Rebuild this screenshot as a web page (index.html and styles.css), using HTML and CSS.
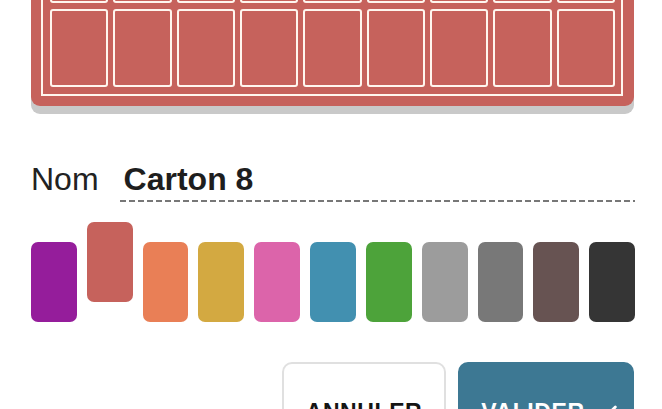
FILE: index.html
```html
<!DOCTYPE html>
<html lang="fr">
<head>
<meta charset="utf-8">
<title>Carton</title>
<link rel="stylesheet" href="styles.css">
</head>
<body>
<div class="page">
  <div class="board">
    <div class="frame">
      <div class="row">
        <div class="cell"></div><div class="cell"></div><div class="cell"></div>
        <div class="cell"></div><div class="cell"></div><div class="cell"></div>
        <div class="cell"></div><div class="cell"></div><div class="cell"></div>
      </div>
      <div class="row">
        <div class="cell"></div><div class="cell"></div><div class="cell"></div>
        <div class="cell"></div><div class="cell"></div><div class="cell"></div>
        <div class="cell"></div><div class="cell"></div><div class="cell"></div>
      </div>
    </div>
  </div>

  <div class="name-row">
    <label class="name-label" for="name">Nom</label>
    <div class="name-input" id="name">Carton 8</div>
  </div>

  <div class="swatches">
    <div class="swatch purple"></div>
    <div class="swatch red selected"></div>
    <div class="swatch orange"></div>
    <div class="swatch gold"></div>
    <div class="swatch pink"></div>
    <div class="swatch blue"></div>
    <div class="swatch green"></div>
    <div class="swatch lightgray"></div>
    <div class="swatch gray"></div>
    <div class="swatch brown"></div>
    <div class="swatch dark"></div>
  </div>

  <div class="actions">
    <button class="btn btn-cancel">ANNULER</button>
    <button class="btn btn-ok">VALIDER<svg class="check" viewBox="0 0 24 24" width="22" height="22"><path d="M4 12.5l5 5L20 6.5" fill="none" stroke="#fff" stroke-width="3.2" stroke-linecap="round" stroke-linejoin="round"/></svg></button>
  </div>
</div>
</body>
</html>
```

FILE: styles.css
```css
html, body {
  margin: 0;
  padding: 0;
  background: #ffffff;
  overflow: hidden;
}

.page {
  padding: 0 27px 0 31px;
  font-family: "Liberation Sans", Arial, sans-serif;
  color: #222;
}

.board {
  width: 603px;
  box-sizing: border-box;
  margin-top: -94px;
  padding: 10px 11px 10px 10px;
  background: #c6625c;
  border-radius: 0 0 9px 9px;
  box-shadow: 0 8px 0 #c9c9c9;
}

.frame {
  border: 2px solid #fff6ef;
  padding: 7px 6px 7px 7px;
  display: flex;
  flex-direction: column;
  gap: 6px;
}

.row {
  display: flex;
  gap: 5px;
}

.cell {
  flex: 1;
  height: 78px;
  box-sizing: border-box;
  border: 2px solid #fff6ef;
  border-radius: 3px;
}

.name-row {
  margin-top: 53px;
  display: flex;
  align-items: flex-start;
  gap: 21px;
}

.name-label {
  font-size: 32px;
  line-height: 40px;
  color: #222;
}

.name-input {
  flex: 1;
  font-size: 32px;
  line-height: 40px;
  font-weight: bold;
  color: #1e1e1e;
  padding: 0 0 3px 4px;
  background-image: linear-gradient(to right, #777 0, #777 6px, transparent 6px);
  background-size: 9px 2px;
  background-repeat: repeat-x;
  background-position: 0 100%;
}

.swatches {
  margin-top: 20px;
  height: 100px;
  display: flex;
  gap: 10px;
}

.swatch {
  flex: 1;
  height: 80px;
  border-radius: 7px;
  align-self: flex-end;
}

.swatch.selected {
  align-self: flex-start;
}

.purple { background: #951d9b; }
.red { background: #c6625c; }
.orange { background: #e97f56; }
.gold { background: #d3a941; }
.pink { background: #dc64aa; }
.blue { background: #4290b0; }
.green { background: #4da33a; }
.lightgray { background: #9c9c9c; }
.gray { background: #787878; }
.brown { background: #675352; }
.dark { background: #353535; }

.actions {
  margin-top: 40px;
  display: flex;
  justify-content: flex-end;
  gap: 12px;
  padding-right: 1px;
}

.btn {
  height: 90px;
  box-sizing: border-box;
  border-radius: 10px;
  font-family: "Liberation Sans", Arial, sans-serif;
  font-weight: bold;
  font-size: 23px;
  letter-spacing: 0.6px;
  display: flex;
  align-items: flex-start;
  justify-content: center;
  padding: 35px 0 0;
  line-height: 26px;
}

.btn-cancel {
  width: 164px;
  background: #fff;
  border: 2px solid #e0e0e0;
  color: #151515;
}

.btn-ok {
  width: 176px;
  background: #3d7893;
  border: 2px solid #3d7893;
  color: #fff;
  padding-left: 8px;
}

.check {
  margin-left: 12px;
  margin-top: 2px;
}
```
